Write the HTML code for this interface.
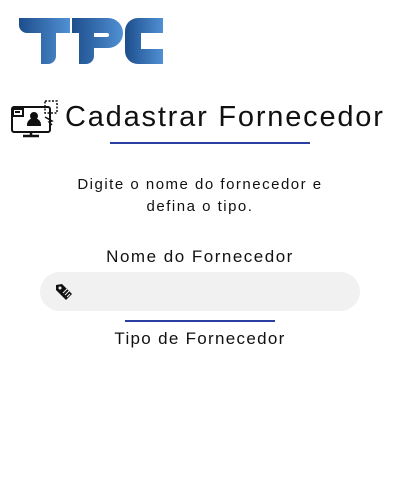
<!DOCTYPE html>
<html><head><style>
body{margin:0;width:400px;height:500px;background:#fff;font-family:"Liberation Sans",sans-serif;position:relative;overflow:hidden;color:#111}
.a{position:absolute}
.c{position:absolute;left:0;width:400px;text-align:center}
</style></head><body>
<svg class="a" style="left:0;top:0" width="180" height="70">
<defs><linearGradient id="g" x1="0" x2="1"><stop offset="0" stop-color="#1d4e8c"/><stop offset="1" stop-color="#5090d4"/></linearGradient></defs>
<g fill="url(#g)">
<path d="M19 18h51v15H56v23a8 8 0 0 1-8 8h-7V33H27a8 8 0 0 1-8-8z"/>
<path d="M72 18h36a15 15 0 0 1 15 15v0a15 15 0 0 1-15 15H94v8a8 8 0 0 1-8 8h-7V33H72z M94 33v4h13a2 2 0 0 0 0-4z"/>
<path d="M138 18h25v15h-22v16h22v15h-25a13 13 0 0 1-13-13V31a13 13 0 0 1 13-13z"/>
</g></svg>
<svg class="a" style="left:10px;top:99px" width="50" height="40" fill="none" stroke="#111" stroke-width="2">
<rect x="2" y="8" width="38" height="25" rx="2"/><path d="M21 33v3M13 37h16" stroke-width="2.5"/>
<rect x="3" y="10" width="10" height="7" fill="#fff"/><path d="M5 13h5"/>
<circle cx="24" cy="17" r="3" fill="#111"/><path d="M18 26a6 6 0 0 1 12 0z" fill="#111"/>
<rect x="35" y="2" width="12" height="12" stroke-dasharray="2 1.5" stroke-width="1.5"/>
<path d="M35 18l7 4-3 1 3 3" stroke-width="1.5"/>
</svg>
<div class="a" style="left:65px;top:101px;font-size:29px;letter-spacing:1.8px;white-space:nowrap">Cadastrar Fornecedor</div>
<div class="a" style="left:110px;top:142px;width:200px;height:2px;background:#2a3f9f"></div>
<div class="c" style="top:174px;font-size:15px;line-height:22px;letter-spacing:1.5px">Digite o nome do fornecedor e<br>defina o tipo.</div>
<div class="c" style="top:247px;font-size:17px;letter-spacing:1.5px">Nome do Fornecedor</div>
<div class="a" style="left:40px;top:272px;width:320px;height:39px;border-radius:20px;background:#f1f1f1"></div>
<svg class="a" style="left:54px;top:282px" width="20" height="20"><path d="M2 3l6-1 10 10-6 6L2 8z" fill="#111"/><circle cx="6" cy="6" r="1.5" fill="#f1f1f1"/><path d="M9 11l4-4M11 13l4-4M13 15l3-3" stroke="#f1f1f1" stroke-width="1"/></svg>
<div class="a" style="left:125px;top:320px;width:150px;height:2px;background:#2a3f9f"></div>
<div class="c" style="top:329px;font-size:17px;letter-spacing:1.3px">Tipo de Fornecedor</div>
</body></html>
